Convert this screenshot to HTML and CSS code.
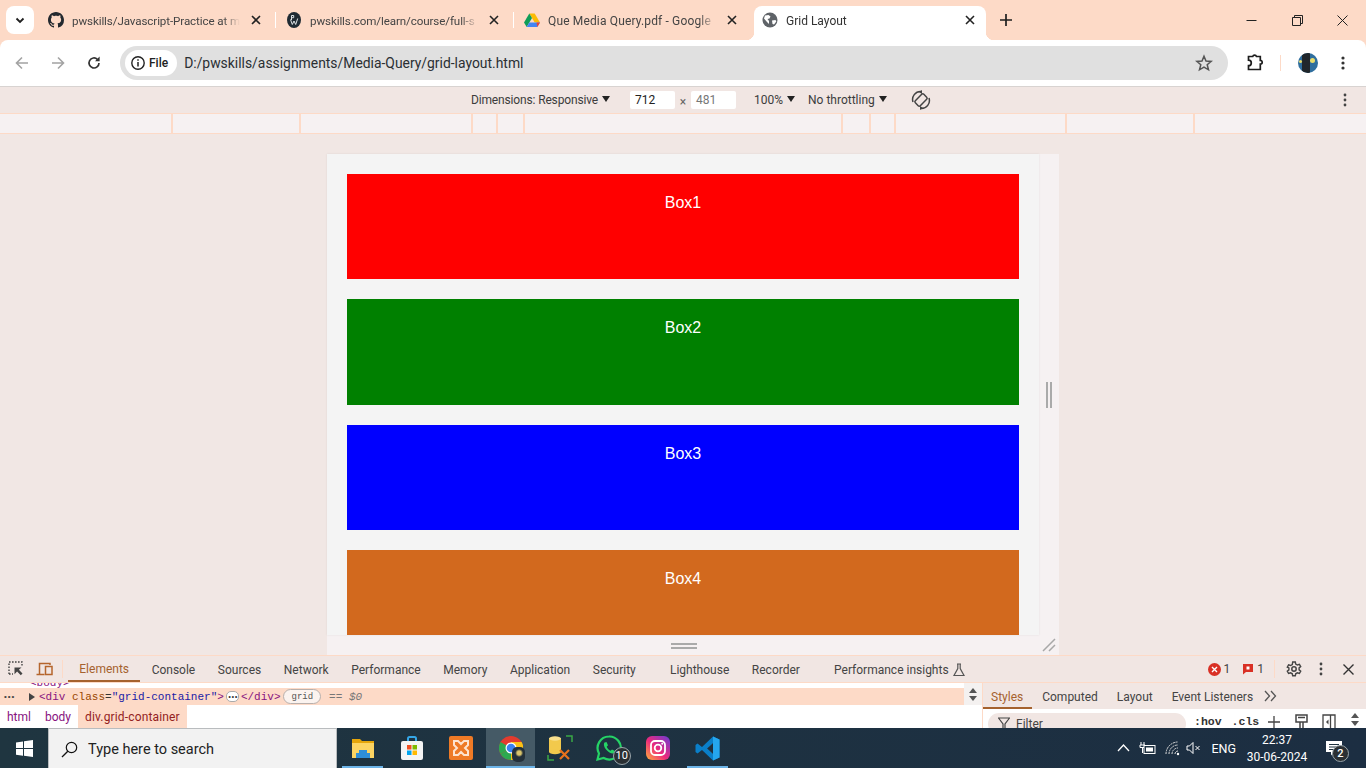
FILE: index.html
```html
<!DOCTYPE html>
<html lang="en">
<head>
  <meta charset="UTF-8">
  <meta name="viewport" content="width=device-width, initial-scale=1.0">
  <title>Grid Layout</title>
  <link rel="stylesheet" href="styles.css">
</head>
<body>
  <!-- Tab strip -->
  <div class="tabstrip">
    <div class="tabsearch"><svg width="12" height="12" viewBox="0 0 12 12"><path d="M2.5 4.5 6 8l3.5-3.5" fill="none" stroke="#1f1f1f" stroke-width="1.8"/></svg></div>
    <div class="tab">
      <svg class="favicon" viewBox="0 0 16 16"><path fill="#24292f" d="M8 0C3.58 0 0 3.58 0 8c0 3.54 2.29 6.53 5.47 7.59.4.07.55-.17.55-.38 0-.19-.01-.82-.01-1.49-2.01.37-2.53-.49-2.69-.94-.09-.23-.48-.94-.82-1.13-.28-.15-.68-.52-.01-.53.63-.01 1.08.58 1.23.82.72 1.21 1.87.87 2.33.66.07-.52.28-.87.51-1.07-1.78-.2-3.64-.89-3.64-3.95 0-.87.31-1.59.82-2.15-.08-.2-.36-1.02.08-2.12 0 0 .67-.21 2.2.82.64-.18 1.32-.27 2-.27s1.36.09 2 .27c1.53-1.04 2.2-.82 2.2-.82.44 1.1.16 1.92.08 2.12.51.56.82 1.27.82 2.15 0 3.07-1.87 3.75-3.65 3.95.29.25.54.73.54 1.48 0 1.07-.01 1.93-.01 2.2 0 .21.15.46.55.38A8.01 8.01 0 0 0 16 8c0-4.42-3.58-8-8-8z"/></svg>
      <span class="tab-title tab-title-narrow">pwskills/Javascript-Practice at m</span>
      <svg class="tab-close" viewBox="0 0 10 10"><path d="M1 1l8 8M9 1 1 9" stroke="#222" stroke-width="1.6"/></svg>
    </div>
    <i class="tab-sep"></i>
    <div class="tab">
      <svg class="favicon" viewBox="0 0 16 16"><ellipse cx="8" cy="8" rx="7" ry="8" fill="#1f2a33"/><path d="M5.5 3.500v4.500M5.500 3.500h2.200v2.200H5.500M4.500 7.500l1.800 5 1.700-3.500 1.700 3.500 2-6" fill="none" stroke="#dfe3e6" stroke-width="1"/></svg>
      <span class="tab-title tab-title-narrow">pwskills.com/learn/course/full-s</span>
      <svg class="tab-close" viewBox="0 0 10 10"><path d="M1 1l8 8M9 1 1 9" stroke="#222" stroke-width="1.6"/></svg>
    </div>
    <i class="tab-sep"></i>
    <div class="tab">
      <svg class="favicon" viewBox="0 0 16 16"><path fill="#fbbc04" d="M5.300 1.500h5.400L16 10.600h-5.300z"/><path fill="#0f9d58" d="M5.300 1.500 0 10.600l2.700 4.400L8 6z"/><path fill="#4285f4" d="M5.300 10.600H16L13.300 15H2.700z"/><path fill="#ea4335" d="M13.300 15 16 10.600h-3.500z"/></svg>
      <span class="tab-title tab-title-wide">Que Media Query.pdf - Google</span>
      <svg class="tab-close" viewBox="0 0 10 10"><path d="M1 1l8 8M9 1 1 9" stroke="#222" stroke-width="1.6"/></svg>
    </div>
    <div class="tab tab-active">
      <svg class="favicon" viewBox="0 0 16 16"><circle cx="8" cy="8" r="7.5" fill="#5f6368"/><path fill="#fff" d="M3 3.500 6.500 3l2 1.500-1 2-2 .5 1.500 2v3L5 10 2 6.500zM10 8.500l3.500-.5.800 1.500-2.300 3-1.500-.5z"/></svg>
      <span class="tab-title">Grid Layout</span>
      <svg class="tab-close" viewBox="0 0 10 10"><path d="M1 1l8 8M9 1 1 9" stroke="#222" stroke-width="1.6"/></svg>
    </div>
    <svg class="newtab" width="12" height="12" viewBox="0 0 12 12"><path d="M6 0v12M0 6h12" stroke="#1f1f1f" stroke-width="1.7"/></svg>
    <div class="winctrls">
      <svg width="11" height="11" viewBox="0 0 11 11"><path d="M.5 5.500h10" stroke="#222"/></svg>
      <svg width="11" height="11" viewBox="0 0 11 11"><path d="M.5 2.500h8v8h-8zM2.500 2.500v-2h8v8h-2" fill="none" stroke="#222"/></svg>
      <svg width="11" height="11" viewBox="0 0 11 11"><path d="M.5.500l10 10M10.500.500l-10 10" stroke="#222"/></svg>
    </div>
  </div>

  <!-- Toolbar -->
  <div class="toolbar">
    <svg class="nav nav-first" viewBox="0 0 16 16"><path d="M14 8H2.500M8 2.500 2.500 8 8 13.500" fill="none" stroke="#a3a3a3" stroke-width="1.6"/></svg>
    <svg class="nav" viewBox="0 0 16 16"><path d="M2 8h11.500M8 2.500 13.500 8 8 13.500" fill="none" stroke="#a3a3a3" stroke-width="1.6"/></svg>
    <svg class="nav" viewBox="0 0 16 16"><path d="M13 8a5 5 0 1 1-1.600-3.700" fill="none" stroke="#333" stroke-width="1.7"/><path d="M13.600 1.600v4.600H9z" fill="#333"/></svg>
    <div class="omnibox">
      <div class="chip">
        <svg width="16" height="16" viewBox="0 0 16 16"><circle cx="8" cy="8" r="6.200" fill="none" stroke="#222" stroke-width="1.4"/><path d="M8 7v4.500M8 4.200v1.600" stroke="#222" stroke-width="1.5"/></svg>
        <span>File</span>
      </div>
      <span class="url">D:/pwskills/assignments/Media-Query/grid-layout.html</span>
      <svg class="star" width="18" height="18" viewBox="0 0 18 18"><path d="M9 2.200 11 7l5.200.4-4 3.400 1.300 5L9 13.200l-4.500 2.600 1.300-5-4-3.400L7 7z" fill="none" stroke="#555" stroke-width="1.5"/></svg>
    </div>
    <svg class="puzzle" width="18" height="18" viewBox="0 0 18 18"><path d="M2.500 2.500h4.200a2 2 0 0 1 3.800 0h3.800v3.800a1.900 1.900 0 0 1 0 3.800v5.400h-11.800v-3.800a2 2 0 0 0 0-5.600z" fill="none" stroke="#1d1d1d" stroke-width="1.7"/></svg>
    <i class="bar-sep"></i>
    <div class="avatar"><i class="avatar-dark"></i><i class="avatar-moon"></i><i class="avatar-star"></i></div>
    <svg class="kebab" width="4" height="16" viewBox="0 0 4 16"><circle cx="2" cy="3" r="1.6" fill="#333"/><circle cx="2" cy="8" r="1.6" fill="#333"/><circle cx="2" cy="13" r="1.6" fill="#333"/></svg>
  </div>

  <!-- Device toolbar -->
  <div class="devicebar">
    <span class="dim-label">Dimensions: Responsive<i class="caret"></i></span>
    <span class="dim-input">712</span>
    <span class="dim-x">&times;</span>
    <span class="dim-input dim-muted">481</span>
    <span class="zoom-label">100%<i class="caret"></i></span>
    <span class="throttle">No throttling<i class="caret"></i></span>
    <svg class="rotate" width="20" height="20" viewBox="0 0 20 20"><g fill="none" stroke="#444" stroke-width="1.5"><rect x="6.500" y="4" width="7" height="12" rx="1.500" transform="rotate(45 10 10)"/><path d="M2 12a8 8 0 0 1 8-10.500M18 8a8 8 0 0 1-8 10.500"/></g><path d="M11 0v4l-3-2zM9 20v-4l3 2z" fill="#444"/></svg>
    <svg class="device-kebab" width="4" height="14" viewBox="0 0 4 14"><circle cx="2" cy="2" r="1.4" fill="#444"/><circle cx="2" cy="7" r="1.4" fill="#444"/><circle cx="2" cy="12" r="1.4" fill="#444"/></svg>
  </div>

  <!-- Media query ruler -->
  <div class="ruler">
    <i></i><i></i><i></i><i></i><i></i><i></i><i></i><i></i><i></i><i></i><i></i>
  </div>

  <!-- Emulated viewport -->
  <div class="stage">
    <div class="frame">
      <div class="page">
        <div class="grid-container">
          <div class="box box-red">Box1</div>
          <div class="box box-green">Box2</div>
          <div class="box box-blue">Box3</div>
          <div class="box box-orange">Box4</div>
        </div>
      </div>
      <div class="handle-right"><i></i><i></i></div>
      <div class="handle-bottom"><i></i><i></i></div>
      <div class="handle-corner">
        <svg width="14" height="14" viewBox="0 0 14 14"><path d="M1 13 13 1M7 13l6-6" stroke="#a8a8a8" stroke-width="1.5"/></svg>
      </div>
    </div>
  </div>

  <!-- DevTools -->
  <div class="devtools">
    <div class="dt-tabs">
      <svg class="dt-icon dt-inspect" width="16" height="16" viewBox="0 0 16 16"><path d="M1 13V1h13v4M1 13h4" fill="none" stroke="#444" stroke-width="1.4" stroke-dasharray="1.600 1.400"/><path d="M6.500 6.500h7l-2.600 2.300 3.600 3.700-1.700 1.700-3.700-3.600-2.600 2.600z" fill="#444"/></svg>
      <svg class="dt-icon" width="17" height="16" viewBox="0 0 17 16"><path d="M3.500 13V2.500h10.500V4M.5 13.500h8" fill="none" stroke="#b5652d" stroke-width="1.5"/><rect x="9.500" y="5.500" width="6.500" height="8" fill="none" stroke="#b5652d" stroke-width="1.5"/></svg>
      <i class="dt-sep dt-sep-main"></i>
      <span class="dt-tab dt-tab-active">Elements</span>
      <span class="dt-tab">Console</span>
      <span class="dt-tab">Sources</span>
      <span class="dt-tab">Network</span>
      <span class="dt-tab">Performance</span>
      <span class="dt-tab">Memory</span>
      <span class="dt-tab">Application</span>
      <span class="dt-tab dt-tab-gap">Security</span>
      <span class="dt-tab">Lighthouse</span>
      <span class="dt-tab dt-tab-gap">Recorder</span>
      <span class="dt-tab">Performance insights
        <svg width="12" height="14" viewBox="0 0 12 14"><path d="M4 1h4M4.800 1v4.500L1 12.500h10L7.200 5.500V1" fill="none" stroke="#555" stroke-width="1.2"/></svg>
      </span>
      <div class="dt-right">
        <svg width="13" height="13" viewBox="0 0 13 13"><circle cx="6.500" cy="6.500" r="6.500" fill="#d93025"/><path d="M4 4l5 5M9 4l-5 5" stroke="#fff" stroke-width="1.4"/></svg>
        <span class="dt-count">1</span>
        <svg class="dt-issue" width="12" height="12" viewBox="0 0 12 12"><path d="M1 1h10v8H4l-3 2.500z" fill="#d93025"/><rect x="4.500" y="3.500" width="3" height="3" fill="#fff"/></svg>
        <span class="dt-count">1</span>
        <i class="dt-sep"></i>
        <svg class="dt-gear" width="16" height="16" viewBox="0 0 16 16"><circle cx="8" cy="8" r="2.200" fill="none" stroke="#444" stroke-width="1.5"/><path d="M6.700 1h2.600l.4 2 1.700 1 2-.7 1.300 2.300-1.600 1.300v2l1.600 1.300-1.300 2.300-2-.7-1.700 1-.4 2H6.700l-.4-2-1.700-1-2 .7-1.300-2.300 1.600-1.300v-2L1.300 6.100l1.300-2.300 2 .7 1.700-1z" fill="none" stroke="#444" stroke-width="1.4"/></svg>
        <svg class="dt-kebab" width="4" height="14" viewBox="0 0 4 14"><circle cx="2" cy="2" r="1.4" fill="#444"/><circle cx="2" cy="7" r="1.4" fill="#444"/><circle cx="2" cy="12" r="1.4" fill="#444"/></svg>
        <svg class="dt-close" width="11" height="11" viewBox="0 0 11 11"><path d="M.5.500l10 10M10.500.500l-10 10" stroke="#333" stroke-width="1.4"/></svg>
      </div>
    </div>
    <div class="dt-panels">
      <div class="dom-panel">
        <div class="dom-tree">
          <div class="dom-clip">&lt;body&gt;</div>
          <div class="dom-row">
            <span class="dom-dots">&#8226;&#8226;&#8226;</span>
            <i class="dom-arrow"></i>
            <span class="tag">&lt;div</span>&nbsp;<span class="attr">class</span>=<span class="val">"grid-container"</span><span class="tag">&gt;</span><span class="dom-more">&#8226;&#8226;&#8226;</span><span class="tag">&lt;/div&gt;</span>
            <span class="dom-badge">grid</span>
            <span class="dom-eq">== <em>$0</em></span>
          </div>
          <div class="dom-scroll"><i class="up"></i><i class="down"></i></div>
        </div>
        <div class="crumbs">
          <span class="crumb">html</span>
          <span class="crumb">body</span>
          <span class="crumb crumb-active">div.grid-container</span>
        </div>
      </div>
      <div class="styles-panel">
        <div class="side-tabs">
          <span class="side-tab side-tab-active">Styles</span>
          <span class="side-tab">Computed</span>
          <span class="side-tab">Layout</span>
          <span class="side-tab">Event Listeners</span>
          <svg width="13" height="12" viewBox="0 0 13 12"><path d="M1 1l4.500 5L1 11M7 1l4.500 5L7 11" fill="none" stroke="#555" stroke-width="1.3"/></svg>
        </div>
        <div class="filter-row">
          <div class="filter">
            <svg width="12" height="14" viewBox="0 0 12 14"><path d="M.5 1h11L7 7v6L5 11.500V7z" fill="none" stroke="#444" stroke-width="1.2"/></svg>
            <span>Filter</span>
          </div>
          <span class="filter-btn">:hov</span>
          <span class="filter-btn">.cls</span>
          <svg class="filter-icon filter-plus" width="12" height="12" viewBox="0 0 12 12"><path d="M6 0v12M0 6h12" stroke="#444" stroke-width="1.3"/></svg>
          <svg class="filter-icon" width="13" height="16" viewBox="0 0 13 16"><path d="M1 1h11v7H1zM3 3.500h7M5 8h3v7H5z" fill="none" stroke="#444" stroke-width="1.5"/></svg>
          <svg class="filter-icon filter-side" width="14" height="16" viewBox="0 0 14 16"><path d="M1 1h12v14H1zM8.500 1v14" fill="none" stroke="#444" stroke-width="1.3"/><path d="M6.500 5.500v5L4 8z" fill="#444"/></svg>
          <div class="filter-scroll"><i class="up"></i><i class="down"></i></div>
        </div>
      </div>
    </div>
  </div>

  <!-- Windows taskbar -->
  <div class="taskbar">
    <div class="start"><svg width="17" height="17" viewBox="0 0 17 17"><path fill="#fff" d="M0 2.400 7 1.400v6.700H0zM8 1.300 17 0v8.100H8zM0 9h7v6.700l-7-1zM8 9h9v8l-9-1.300z"/></svg></div>
    <div class="search">
      <svg width="17" height="17" viewBox="0 0 17 17"><circle cx="10.500" cy="6.500" r="5.200" fill="none" stroke="#111" stroke-width="1.2"/><path d="M6.800 10.200 1 16" stroke="#111" stroke-width="1.3"/></svg>
      <span>Type here to search</span>
    </div>
    <div class="task-items">
      <div class="task task-open">
        <svg width="24" height="24" viewBox="0 0 24 24"><path fill="#e5a50a" d="M1 3h8l2 2h12v5H1z"/><path fill="#fcd462" d="M1 7h22v15H1z"/><path fill="#2f8fd8" d="M8 14h8v3h3v5H5v-5h3z"/></svg>
      </div>
      <div class="task">
        <svg width="24" height="26" viewBox="0 0 24 26"><path d="M8 7V3.500A1.500 1.500 0 0 1 9.500 2h5A1.500 1.500 0 0 1 16 3.500V7" fill="none" stroke="#35a7e8" stroke-width="2"/><rect x="1" y="6" width="22" height="19" rx="2" fill="#f4f4f4"/><rect x="7" y="10" width="4.500" height="4.500" fill="#f25022"/><rect x="12.500" y="10" width="4.500" height="4.500" fill="#7fba00"/><rect x="7" y="15.500" width="4.500" height="4.500" fill="#00a4ef"/><rect x="12.500" y="15.500" width="4.500" height="4.500" fill="#ffb900"/></svg>
      </div>
      <div class="task">
        <svg width="24" height="24" viewBox="0 0 24 24"><rect width="24" height="24" rx="2" fill="#ee7a26"/><path d="M5 5h4l3 3 3-3h4v4l-3 3 3 3v4h-4l-3-3-3 3H5v-4l3-3-3-3z" fill="none" stroke="#fde3cf" stroke-width="2"/></svg>
      </div>
      <div class="task task-active">
        <svg width="24" height="24" viewBox="0 0 24 24"><circle cx="12" cy="12" r="12" fill="#e33b2e"/><path d="M12 12 1.600 18A12 12 0 0 1 1.600 6L12 12z" fill="#2da94f"/><path d="M1.600 18 12 12l5.500 10.600A12 12 0 0 1 1.600 18z" fill="#2da94f"/><path d="M12 6h10.600A12 12 0 0 1 12 24z" fill="#fbc116"/><circle cx="12" cy="12" r="5.500" fill="#fff"/><circle cx="12" cy="12" r="4.300" fill="#3b82f0"/></svg>
        <i class="task-chrome-badge"></i>
      </div>
      <div class="task">
        <svg width="26" height="26" viewBox="0 0 26 26"><path d="M1 20v5h6M19 1h6v6" fill="none" stroke="#3aa845" stroke-width="1.5"/><path d="M2 3h12v14H2z" fill="#f2c94c"/><ellipse cx="8" cy="3.500" rx="6" ry="2.200" fill="#f8e08e"/><ellipse cx="8" cy="17" rx="6" ry="2.200" fill="#f2c94c"/><path d="M13 24l9-9M22 24l-9-9" stroke="#e8721c" stroke-width="2.200"/></svg>
      </div>
      <div class="task">
        <svg width="26" height="26" viewBox="0 0 26 26"><path d="M13 1.500A11.500 11.500 0 0 0 3 18.500L1.500 24.500l6.200-1.500A11.500 11.500 0 1 0 13 1.500z" fill="none" stroke="#25d366" stroke-width="2.200"/><path d="M8.500 7.500c-1.500 2 0 5.500 2.500 8s5.500 3.500 7 2.500l1-2-3-1.500-1.300 1.300c-1.500-.5-3.500-2.500-4-4L12 10.300 10.500 7z" fill="#25d366"/></svg>
        <span class="task-badge task-badge-wa">10</span>
      </div>
      <div class="task">
        <svg width="24" height="24" viewBox="0 0 24 24"><defs><linearGradient id="ig" x1="0" y1="1" x2="1" y2="0"><stop offset="0" stop-color="#fdb13b"/><stop offset=".45" stop-color="#ee2a7b"/><stop offset="1" stop-color="#6a3bd6"/></linearGradient></defs><rect width="24" height="24" rx="6" fill="url(#ig)"/><rect x="5" y="5" width="14" height="14" rx="4" fill="none" stroke="#fff" stroke-width="1.8"/><circle cx="12" cy="12" r="3.300" fill="none" stroke="#fff" stroke-width="1.8"/><circle cx="16.200" cy="7.800" r="1" fill="#fff"/></svg>
      </div>
      <div class="task task-open">
        <svg width="25" height="25" viewBox="0 0 25 25"><path fill="#0a7fc9" d="M18 .5 24.500 3.500v18L18 24.500 7 14l-4.500 3.500L.5 16V9l2-1.500L7 11z"/><path fill="#25a6ee" d="M18 .5v24l6.500-3v-18zM18 7l-6 5.500 6 5.500z"/><path fill="#1f2f3d" d="M18 7v11l-6-5.500z"/></svg>
      </div>
    </div>
    <div class="tray">
      <svg class="tray-caret" width="13" height="8" viewBox="0 0 13 8"><path d="M1 7l5.500-6L12 7" fill="none" stroke="#fff" stroke-width="1.3"/></svg>
      <svg class="tray-icon" width="17" height="14" viewBox="0 0 17 14"><path d="M2 1v3M5 1v3M1 4h5v2.500H1zM3.500 6.500V12" fill="none" stroke="#fff"/><rect x="5" y="4.500" width="11" height="8" fill="#1e3040" stroke="#fff"/><rect x="7" y="6.500" width="7" height="4" fill="#fff"/></svg>
      <svg class="tray-icon" width="15" height="15" viewBox="0 0 15 15"><path d="M1 13A12 12 0 0 1 13 1M4 13a9 9 0 0 1 9-9M7 13a6 6 0 0 1 6-6M10 13a3 3 0 0 1 3-3" fill="none" stroke="#ddd" stroke-width="1" stroke-dasharray="2 .7"/><circle cx="13" cy="13" r="1.2" fill="#fff"/></svg>
      <svg class="tray-icon tray-sound" width="15" height="14" viewBox="0 0 15 14"><path d="M1 5h2.500L7 1.500v11L3.500 9H1z" fill="none" stroke="#fff"/><path d="M9.500 5l4 4M13.500 5l-4 4" stroke="#fff"/></svg>
      <span class="tray-lang">ENG</span>
      <div class="clock"><span>22:37</span><span>30-06-2024</span></div>
      <div class="notify">
        <svg width="16" height="15" viewBox="0 0 16 15"><path d="M0 0h16v11H8l-3 3.500V11H0z" fill="#fff"/><path d="M3 3.500h10M3 6h10M3 8.500h6" stroke="#1f3240"/></svg>
        <span class="notify-badge">2</span>
      </div>
    </div>
  </div>
</body>
</html>
```

FILE: styles.css
```css
* {
  box-sizing: border-box;
}

html, body {
  margin: 0;
  height: 100%;
  overflow: hidden;
}

body {
  width: 1366px;
  height: 768px;
  display: flex;
  flex-direction: column;
  font-family: Roboto, "Liberation Sans", sans-serif;
  font-size: 12px;
  color: #333;
  background-color: #fddac7;
}

/* tab strip */
.tabstrip {
  height: 40px;
  flex: none;
  display: flex;
  align-items: flex-end;
  background-color: #fddac7;
}

.tabsearch {
  width: 28px;
  height: 28px;
  margin: 0 6px 6px 6px;
  display: flex;
  align-items: center;
  justify-content: center;
  background-color: #fff;
  border-radius: 8px;
}

.tab {
  position: relative;
  width: 232px;
  height: 34px;
  padding: 0 8px 6px;
  display: flex;
  align-items: center;
  border-radius: 8px 8px 0 0;
  color: #444;
}

.tab-sep {
  width: 1px;
  height: 16px;
  margin: 0 2.5px 12px;
  background-color: #fff;
}

.tab-active {
  margin-left: 6px;
  background-color: #fff;
  color: #333;
}

/* the flared bottom corners of the open tab */
.tab-active::before, .tab-active::after {
  content: "";
  position: absolute;
  bottom: 0;
  width: 8px;
  height: 8px;
}

.tab-active::before {
  left: -8px;
  background: radial-gradient(circle at 0 0, transparent 8px, #fff 8.5px);
}

.tab-active::after {
  right: -8px;
  background: radial-gradient(circle at 100% 0, transparent 8px, #fff 8.5px);
}

.favicon {
  width: 16px;
  height: 16px;
  flex: none;
}

.tab-title {
  flex: 1;
  margin: 0 8px;
  padding-top: 2px;
  white-space: nowrap;
  overflow: hidden;
  -webkit-mask-image: linear-gradient(to right, #000 90%, transparent 100%);
  mask-image: linear-gradient(to right, #000 90%, transparent 100%);
}

.tab-title-narrow {
  letter-spacing: -0.1px;
  font-size: 11.6px;
}

.tab-title-wide {
  letter-spacing: 0.15px;
}

.tab-close {
  width: 10px;
  height: 10px;
  margin: 0 3px;
  flex: none;
}

.newtab {
  margin: 0 0 14px 14px;
}

.winctrls {
  margin-left: auto;
  width: 138px;
  height: 40px;
  padding: 0 18px;
  display: flex;
  align-items: center;
  justify-content: space-between;
  align-self: flex-start;
}

/* toolbar */
.toolbar {
  height: 47px;
  flex: none;
  display: flex;
  align-items: center;
  background-color: #fff;
  border-bottom: 1px solid #d8d3d1;
  border-radius: 8px 8px 0 0;
}

.nav {
  width: 16px;
  height: 16px;
  margin-right: 20px;
}

.nav-first {
  margin-left: 14px;
}

.omnibox {
  width: 1108px;
  height: 34px;
  margin-left: -2px;
  padding: 0 15px 0 5px;
  display: flex;
  align-items: center;
  background-color: #e0e0e0;
  border-radius: 17px;
}

.chip {
  height: 26px;
  padding: 0 9px 0 5px;
  display: flex;
  align-items: center;
  gap: 3px;
  background-color: #fff;
  border-radius: 13px;
  font-weight: 500;
  color: #222;
}

.url {
  margin-left: 7px;
  font-size: 13.9px;
  color: #2a2f33;
}

.star {
  margin-left: auto;
}

.puzzle {
  margin-left: 18px;
}

.bar-sep {
  width: 1px;
  height: 16px;
  margin: 0 17px 0 16px;
  background-color: #fddac7;
}

.avatar {
  position: relative;
  width: 20px;
  height: 20px;
  border-radius: 50%;
  overflow: hidden;
  background-color: #2f6e9e;
}

.avatar-dark {
  position: absolute;
  left: 4px;
  top: 0;
  width: 8px;
  height: 20px;
  background-color: #20262b;
}

.avatar-moon {
  position: absolute;
  right: 3px;
  top: 5px;
  width: 5px;
  height: 5px;
  border-radius: 50%;
  background-color: #e8dc6a;
}

.avatar-star {
  position: absolute;
  left: 1px;
  top: 7px;
  width: 3px;
  height: 3px;
  border-radius: 50%;
  background-color: #e8dc6a;
}

.kebab {
  margin-left: 23px;
}

/* device toolbar */
.devicebar {
  height: 26px;
  flex: none;
  padding-left: 471px;
  display: flex;
  align-items: center;
  background-color: #f1e6e3;
  color: #3c3c3c;
}

.caret {
  display: inline-block;
  margin: 0 0 2px 4px;
  border-left: 4px solid transparent;
  border-right: 4px solid transparent;
  border-top: 6px solid #222;
}

.dim-label {
  width: 159px;
  letter-spacing: -0.15px;
}

.dim-input {
  width: 45px;
  height: 18px;
  padding-left: 5px;
  line-height: 18px;
  background-color: #fff;
  border-radius: 2px;
  color: #222;
}

.dim-muted {
  color: #777;
}

.dim-x {
  width: 16px;
  text-align: center;
  padding-top: 3px;
  color: #666;
}

.zoom-label {
  margin-left: 18px;
}

.throttle {
  margin-left: 13px;
}

.rotate {
  margin-left: 24px;
}

.device-kebab {
  margin-left: auto;
  margin-right: 19px;
}

/* ruler */
.ruler {
  height: 21px;
  flex: none;
  display: grid;
  grid-template-columns: 173px 128px 172px 25px 27px 318px 28px 25px 171px 128px 1fr;
  background-color: #f6f1f2;
  border-top: 1px solid #fddac7;
  border-bottom: 1px solid #fddac7;
}

.ruler i {
  border-right: 2px solid #fddac7;
}

.ruler i:last-child {
  border-right: 0;
}

/* emulated viewport */
.stage {
  flex: 1;
  min-height: 0;
  padding: 20px 0 0 20px;
  display: flex;
  justify-content: center;
  align-items: flex-start;
  background-color: #f1e7e4;
}

.frame {
  position: relative;
  display: grid;
  grid-template-columns: 712px 20px;
  grid-template-rows: 481px 20px;
  background-color: #f6f1f2;
}

.page {
  overflow: hidden;
  background-color: #f4f4f4;
  box-shadow: 0 0 2px rgba(0, 0, 0, 0.08);
}

.grid-container {
  display: grid;
  gap: 20px;
  padding: 20px;
}

.box {
  height: 105.33px;
  padding-top: 20px;
  text-align: center;
  font-family: "Liberation Sans", Arial, sans-serif;
  font-size: 16px;
  color: #fff;
}

.box-red {
  background-color: #f00;
}

.box-green {
  background-color: #008000;
}

.box-blue {
  background-color: #00f;
}

.box-orange {
  background-color: #d2691e;
}

.handle-right {
  display: flex;
  align-items: center;
  justify-content: center;
  gap: 2px;
}

.handle-right i {
  width: 2px;
  height: 26px;
  background-color: #aaa;
}

.handle-bottom {
  padding: 2px 0 0 2px;
  display: flex;
  flex-direction: column;
  align-items: center;
  justify-content: center;
  gap: 2px;
}

.handle-bottom i {
  width: 26px;
  height: 2px;
  background-color: #aaa;
}

.handle-corner {
  padding: 3px;
  display: flex;
  align-items: flex-end;
  justify-content: flex-end;
}

/* devtools */
.devtools {
  height: 73px;
  flex: none;
  display: flex;
  flex-direction: column;
  background-color: #fff;
  border-top: 1px solid #fddac7;
  overflow: hidden;
}

.dt-tabs {
  height: 27px;
  flex: none;
  display: flex;
  align-items: center;
  background-color: #f1e6e3;
  border-bottom: 1px solid #fddac7;
  color: #444;
}

.dt-icon {
  margin-left: 8px;
}

.dt-inspect {
  margin-right: 4px;
}

.dt-sep {
  width: 1px;
  height: 18px;
  background-color: #fddac7;
}

.dt-sep-main {
  margin: 0 5px 0 9px;
}

.dt-tab {
  height: 26px;
  padding: 2px 11.3px 0;
  display: flex;
  align-items: center;
  gap: 4px;
  white-space: nowrap;
}

.dt-tab-active {
  color: #a5622e;
  border-bottom: 2px solid #a5622e;
}

.dt-tab-gap {
  margin-right: 11.6px;
}

.dt-right {
  margin-left: auto;
  padding-right: 12px;
  display: flex;
  align-items: center;
}

.dt-count {
  margin-left: 3px;
}

.dt-issue {
  margin-left: 12px;
}

.dt-right .dt-sep {
  margin: 0 11px 0 10px;
}

.dt-kebab {
  margin-left: 17px;
}

.dt-close {
  margin-left: 20px;
}

.dt-panels {
  flex: 1;
  min-height: 0;
  display: flex;
}

.dom-panel {
  width: 982px;
  flex: none;
  display: flex;
  flex-direction: column;
}

.dom-tree {
  position: relative;
  height: 22px;
  flex: none;
  overflow: hidden;
  font-family: "Liberation Mono", monospace;
  font-size: 11px;
}

.dom-clip {
  height: 5px;
  padding-left: 30px;
  line-height: 0;
  color: #881280;
}

.dom-row {
  height: 17px;
  display: flex;
  align-items: center;
  white-space: nowrap;
  background-color: #fddac7;
}

.dom-dots {
  width: 29px;
  padding-left: 3px;
  font-size: 8px;
  letter-spacing: -1px;
  color: #444;
}

.dom-arrow {
  width: 0;
  height: 0;
  margin-right: 4px;
  border-top: 4px solid transparent;
  border-bottom: 4px solid transparent;
  border-left: 6px solid #444;
}

.tag {
  color: #881280;
}

.attr {
  color: #994500;
}

.val {
  color: #1a1aa6;
}

.dom-more {
  width: 13px;
  height: 11px;
  margin: 0 2px;
  text-align: center;
  line-height: 10px;
  font-size: 7px;
  letter-spacing: -1px;
  color: #333;
  background-color: #fff;
  border: 1px solid #aaa;
  border-radius: 5px;
}

.dom-badge {
  height: 15px;
  margin-left: 3px;
  padding: 0 7px;
  line-height: 14px;
  font-size: 9px;
  color: #555;
  background-color: #fbf3ef;
  border: 1px solid #b9b0ac;
  border-radius: 8px;
}

.dom-eq {
  margin-left: 8px;
  color: #777;
}

.dom-scroll {
  position: absolute;
  right: 0;
  top: 0;
  bottom: 0;
  width: 18px;
  display: flex;
  flex-direction: column;
  align-items: center;
  justify-content: center;
  gap: 3px;
  background-color: #f4f1f0;
}

.up, .down {
  width: 0;
  height: 0;
  border-left: 4px solid transparent;
  border-right: 4px solid transparent;
}

.up {
  border-bottom: 5px solid #555;
}

.down {
  border-top: 5px solid #555;
}

.crumbs {
  height: 23px;
  display: flex;
  color: #881280;
}

.crumb {
  padding: 1px 7px 0;
  line-height: 23px;
}

.crumb-active {
  letter-spacing: 0.15px;
  background-color: #fddac7;
  color: #93211e;
}

.styles-panel {
  flex: 1;
  min-width: 0;
  border-left: 1px solid #fddac7;
}

.side-tabs {
  height: 26px;
  display: flex;
  align-items: center;
  background-color: #f1e6e3;
  color: #444;
}

.side-tab {
  height: 26px;
  padding: 1px 9px 0 8px;
  margin-right: 2px;
  line-height: 26px;
}

.side-tab-active {
  color: #a5622e;
  border-bottom: 2px solid #a5622e;
}

.filter-row {
  height: 20px;
  padding: 4px 0 0 5px;
  display: flex;
  align-items: flex-start;
  overflow: hidden;
}

.filter {
  width: 198px;
  height: 22px;
  margin-right: 8px;
  padding-left: 10px;
  display: flex;
  align-items: center;
  gap: 6px;
  background-color: #f1e6e3;
  border-radius: 11px;
  color: #444;
}

.filter-btn {
  margin: 2px 10px 0 0;
  font-family: "Liberation Mono", monospace;
  font-size: 11.5px;
  font-weight: 700;
  line-height: 14px;
}

.filter-icon {
  margin: 1px 14px 0 0;
}

.filter-plus {
  margin: 3px 15px 0 -1px;
}

.filter-side {
  margin-right: 15px;
}

.filter-scroll {
  display: flex;
  flex-direction: column;
  gap: 3px;
}

/* taskbar */
.taskbar {
  height: 40px;
  flex: none;
  display: flex;
  align-items: center;
  color: #fff;
  background: linear-gradient(to right, #1f3540, #1c2e42);
}

.start {
  width: 48px;
  display: flex;
  justify-content: center;
}

.search {
  width: 289px;
  height: 40px;
  padding: 1px 0 0 12px;
  display: flex;
  align-items: center;
  gap: 10px;
  font-size: 14.5px;
  color: #222;
  background-color: #f2f2f2;
  border: 1px solid #b9bcbe;
  border-bottom: 0;
}

.task-items {
  margin-left: 1px;
  display: flex;
}

.task {
  position: relative;
  width: 49.3px;
  height: 40px;
  display: flex;
  align-items: center;
  justify-content: center;
}

.task-open::after, .task-active::after {
  content: "";
  position: absolute;
  left: 4px;
  right: 4px;
  bottom: 0;
  height: 2px;
  background-color: #6cb4e8;
}

.task-active {
  background-color: #455a66;
}

.task-active::after {
  left: 0;
  right: 0;
}

.task-chrome-badge {
  position: absolute;
  right: 10px;
  bottom: 6px;
  width: 13px;
  height: 15px;
  border-radius: 5px;
  background: radial-gradient(circle at 55% 40%, #d9c46a 0 2px, #23303a 4px);
}

.task-badge {
  position: absolute;
  right: 3px;
  bottom: 3px;
  width: 18px;
  height: 18px;
  text-align: center;
  line-height: 16px;
  font-size: 11px;
  border: 1px solid #9aa5ab;
  border-radius: 50%;
  background-color: #2a2f33;
}

.tray {
  margin-left: auto;
  height: 40px;
  display: flex;
  align-items: center;
  padding-right: 24px;
}

.tray-icon {
  margin-left: 9px;
}

.tray-sound {
  margin-left: 6px;
}

.tray-caret + .tray-icon {
  margin-left: 9px;
}

.tray-lang {
  margin-left: 10px;
  font-size: 12.5px;
}

.clock {
  margin-left: 8px;
  padding-top: 1px;
  width: 66px;
  display: flex;
  flex-direction: column;
  align-items: center;
  gap: 5px;
  font-size: 12px;
  line-height: 12px;
}

.clock span:first-child {
  margin-top: -1px;
}

.notify {
  position: relative;
  margin-left: 16px;
  display: flex;
}

.notify-badge {
  position: absolute;
  right: -7px;
  bottom: -6px;
  width: 17px;
  height: 17px;
  text-align: center;
  line-height: 15px;
  font-size: 11px;
  font-weight: 500;
  border: 1px solid #9aa5ab;
  border-radius: 50%;
  background-color: #2a2f33;
}
```
